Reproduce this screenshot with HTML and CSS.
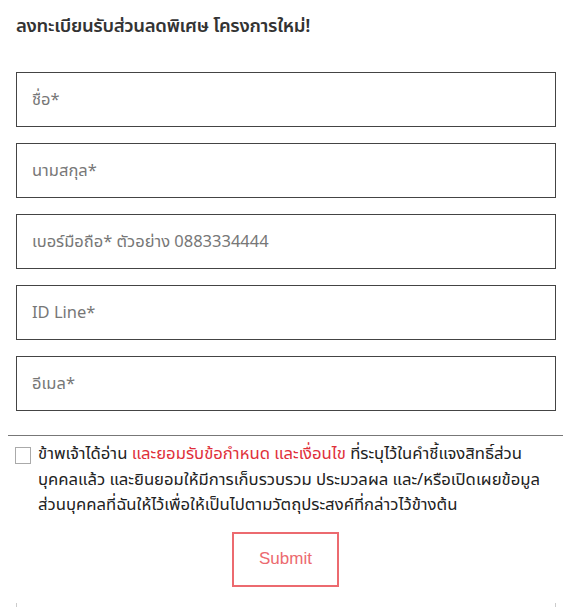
FILE: index.html
```html
<!DOCTYPE html>
<html lang="th">
<head>
<meta charset="utf-8">
<link rel="stylesheet" href="styles.css">
</head>
<body>
<div class="page">
  <h1 class="title">ลงทะเบียนรับส่วนลดพิเศษ โครงการใหม่!</h1>
  <form class="form">
    <div class="fields">
      <input class="field" type="text" placeholder="ชื่อ*">
      <input class="field" type="text" placeholder="นามสกุล*">
      <input class="field" type="text" placeholder="เบอร์มือถือ* ตัวอย่าง 0883334444">
      <input class="field" type="text" placeholder="ID Line*">
      <input class="field" type="text" placeholder="อีเมล*">
    </div>
    <div class="divider"></div>
    <label class="consent">
      <span class="box"></span>
      <span class="consent-text">ข้าพเจ้าได้อ่าน <span class="link">และยอมรับข้อกำหนด และเงื่อนไข</span> ที่ระบุไว้ในคำชี้แจงสิทธิ์ส่วน<br>บุคคลแล้ว และยินยอมให้มีการเก็บรวบรวม ประมวลผล และ/หรือเปิดเผยข้อมูล<br>ส่วนบุคคลที่ฉันให้ไว้เพื่อให้เป็นไปตามวัตถุประสงค์ที่กล่าวไว้ข้างต้น</span>
    </label>
    <div class="actions">
      <button class="submit" type="button">Submit</button>
    </div>
    <div class="next"></div>
  </form>
</div>
</body>
</html>
```
FILE: styles.css
```css
html, body {
  margin: 0;
  padding: 0;
  background: #fff;
}
body {
  font-family: "Noto Sans Thai", "Noto Sans", "Liberation Sans", sans-serif;
  color: #222;
}
.page {
  width: 578px;
  height: 607px;
  overflow: hidden;
}
.title {
  margin: 0;
  padding: 12px 16px 0;
  height: 60px;
  box-sizing: border-box;
  font-size: 18.5px;
  font-weight: 600;
  color: #333;
  letter-spacing: -0.3px;
}
.form {
  margin: 12px 0 0;
}
.fields {
  display: flex;
  flex-direction: column;
  gap: 16px;
  padding-left: 16px;
}
.field {
  width: 540px;
  height: 55px;
  box-sizing: border-box;
  border: 1px solid #444;
  border-radius: 0;
  padding: 0 15px;
  font-family: inherit;
  font-size: 16.5px;
  color: #333;
  outline: none;
  background: #fff;
}
.field::placeholder {
  color: #777;
}
.divider {
  margin: 24px 0 0 8px;
  width: 555px;
  height: 1px;
  background: #777;
}
.consent {
  display: flex;
  gap: 7px;
  margin: 10px 0 0 15px;
  width: 548px;
}
.box {
  flex: 0 0 auto;
  width: 14px;
  height: 15px;
  border: 1px solid #aaa;
  margin-top: 1px;
  background: #fff;
}
.consent-text {
  font-size: 16.7px;
  line-height: 25.5px;
  color: #222;
  margin-top: -4px;
  white-space: nowrap;
}
.link {
  color: #e0303a;
}
.actions {
  display: flex;
  justify-content: center;
  margin-top: 13px;
  width: 571px;
}
.submit {
  width: 107px;
  height: 55px;
  border: 2px solid #ec6a6f;
  background: #fff;
  color: #ec6a6f;
  font-family: "Liberation Sans", Arial, sans-serif;
  font-size: 17px;
  padding: 0;
  cursor: pointer;
}
.next {
  margin: 16px 0 0 16px;
  width: 540px;
  height: 20px;
  box-sizing: border-box;
  border-left: 1px solid #ccc;
  border-right: 1px solid #ccc;
}
```
